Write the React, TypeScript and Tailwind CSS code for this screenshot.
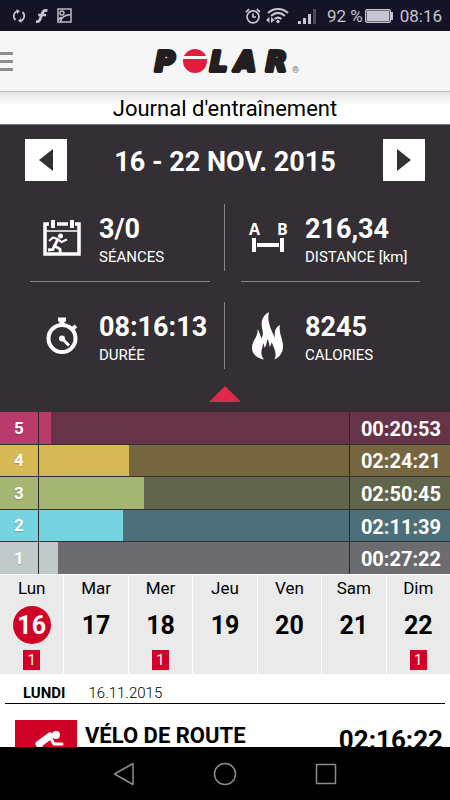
import React from 'react';

interface Zone {
  id: number;
  time: string;
  percent: number;
  solid: string;
  dim: string;
}

interface Day {
  label: string;
  date: number;
  count?: number;
  active?: boolean;
}

const zones: Zone[] = [
  { id: 5, time: '00:20:53', percent: 4, solid: 'bg-[#b93a6b]', dim: 'bg-[#663349]' },
  { id: 4, time: '02:24:21', percent: 29, solid: 'bg-[#d6b856]', dim: 'bg-[#756640]' },
  { id: 3, time: '02:50:45', percent: 34, solid: 'bg-[#a4b672]', dim: 'bg-[#60654b]' },
  { id: 2, time: '02:11:39', percent: 27, solid: 'bg-[#76d3e0]', dim: 'bg-[#4c6f79]' },
  { id: 1, time: '00:27:22', percent: 6, solid: 'bg-[#c1c9cb]', dim: 'bg-[#6b6b70]' },
];

const days: Day[] = [
  { label: 'Lun', date: 16, count: 1, active: true },
  { label: 'Mar', date: 17 },
  { label: 'Mer', date: 18, count: 1 },
  { label: 'Jeu', date: 19 },
  { label: 'Ven', date: 20 },
  { label: 'Sam', date: 21 },
  { label: 'Dim', date: 22, count: 1 },
];

const StatusBar: React.FC = () => (
  <div className="flex h-[31px] shrink-0 items-center bg-[#151426] pl-3 pr-2 text-[#c6c5d0]">
    <svg width="14" height="14" viewBox="0 0 14 14" fill="none" stroke="currentColor" strokeWidth="1.7">
      <path d="M5.5 2A5.3 5.3 0 0 0 3.5 11M8.5 12A5.3 5.3 0 0 0 10.5 3" />
      <path d="M4.5 0L8 2.2L5 5zM9.5 14L6 11.8L9 9z" fill="currentColor" stroke="none" />
    </svg>
    <svg className="ml-[9px]" width="13" height="14" viewBox="0 0 13 14" fill="none" stroke="currentColor" strokeWidth="2.7">
      <path d="M12.5 1.6C9.5 1 8.2 1.8 7.4 4L4.8 11C4.3 12.3 3.2 12.8 1 12.6M3.2 6H11" />
    </svg>
    <svg className="ml-[9px]" width="15" height="15" viewBox="0 0 15 15" fill="none" stroke="currentColor" strokeWidth="1.4">
      <rect x="1" y="1" width="13" height="13" />
      <circle cx="5" cy="5" r="2" />
      <path d="M3.5 14C4 9.5 7.5 7 14 6.5M1 12.5C2 10.5 3 9.5 5 9.5" />
    </svg>
    <div className="ml-auto flex items-center">
      <svg width="16" height="16" viewBox="0 0 16 16" fill="none" stroke="currentColor" strokeWidth="1.7">
        <circle cx="8" cy="8.8" r="6" />
        <path d="M8 5.5V9H11M1 4L4.2 1.2M15 4L11.8 1.2" />
      </svg>
      <svg className="ml-[5px]" width="23" height="17" viewBox="0 0 23 17" fill="none" stroke="currentColor" strokeWidth="2">
        <path d="M2 6C7.5 0.5 16.5 0.5 22 6M5 9C9.5 5 14.5 5 19 9M8.5 12C11 10 13 10 15.5 12" />
        <circle cx="12" cy="14.5" r="1.7" fill="currentColor" stroke="none" />
        <path d="M3.5 10V16L0 13zM5 10V16L8.5 13z" fill="currentColor" stroke="none" />
      </svg>
      <svg className="ml-[9px]" width="19" height="16" viewBox="0 0 19 16" fill="currentColor">
        <path d="M0 13h3v3H0zM5 10h3v6H5zM10 6h3v10h-3z" />
        <path d="M15 1h3v15h-3z" opacity="0.3" />
      </svg>
      <span className="ml-[10px] text-[17px] leading-5">92 %</span>
      <svg className="ml-[2px]" width="28" height="14" viewBox="0 0 28 14">
        <rect x="0.7" y="0.7" width="24.6" height="12.6" rx="1.5" fill="none" stroke="currentColor" strokeWidth="1.4" />
        <rect x="2" y="2" width="22" height="10" fill="currentColor" />
        <rect x="26" y="3" width="2" height="8" fill="currentColor" />
      </svg>
      <span className="ml-[7px] text-[17px] leading-5">08:16</span>
    </div>
  </div>
);

const PolarLogo: React.FC = () => (
  <svg width="152" height="48" viewBox="0 0 152 48" role="img" aria-label="Polar">
    <g
      fill="#231f20"
      stroke="#231f20"
      strokeWidth="4"
      strokeLinejoin="round"
      fontSize="27"
      fontWeight="700"
      fontStyle="italic"
      fontFamily="DejaVu Sans, sans-serif"
    >
      <text x="6" y="34">P</text>
      <text x="61" y="34">L</text>
      <text x="86" y="34">A</text>
      <text x="117" y="34">R</text>
    </g>
    <circle cx="46" cy="24" r="12" fill="#e31b3c" />
    <rect x="33" y="19" width="26" height="3" fill="#f6f6f6" />
    <text x="143" y="36" fontSize="9" fill="#777777" fontFamily="Roboto, sans-serif">®</text>
  </svg>
);

const SessionsIcon: React.FC = () => (
  <svg width="40" height="38" viewBox="0 0 40 38" fill="none" stroke="currentColor">
    <path d="M7 5H3V35H37V5H33" strokeWidth="3.5" />
    <path d="M4 12H36" strokeWidth="1.5" />
    <path d="M11 1V9M30 1V9" strokeWidth="4" />
    <path d="M15 5H26" strokeWidth="3.5" />
    <circle cx="18.5" cy="17" r="2.5" fill="currentColor" stroke="none" />
    <path d="M7 22L11 18.5L15.5 20L19.5 23L25 20.5" strokeWidth="2" />
    <path d="M16 20L12.5 27L18 30L18.5 35M12.5 26L11 30.5L6 31" strokeWidth="2.8" />
  </svg>
);

const DistanceIcon: React.FC = () => (
  <svg width="40" height="42" viewBox="0 0 40 42" fill="currentColor">
    <text x="1" y="18" fontSize="16" fontWeight="700" fontFamily="Open Sans, sans-serif">A</text>
    <text x="29" y="18" fontSize="16" fontWeight="700" fontFamily="Open Sans, sans-serif">B</text>
    <path d="M4 21h4v14H4zM9 26h22v4H9zM32 21h4v14h-4z" />
  </svg>
);

const DurationIcon: React.FC = () => (
  <svg width="40" height="38" viewBox="0 0 40 38" fill="none" stroke="currentColor">
    <circle cx="20" cy="21.5" r="13.5" strokeWidth="4" />
    <path d="M20 3V8" strokeWidth="5" />
    <path d="M16 2.5H24" strokeWidth="4" />
    <path d="M31 11.5L34 9" strokeWidth="4" />
    <circle cx="20" cy="21.5" r="3" fill="currentColor" stroke="none" />
    <path d="M20 21.5L27 28.5" strokeWidth="3" />
  </svg>
);

const CaloriesIcon: React.FC = () => (
  <svg width="40" height="50" viewBox="0 0 40 50" fill="currentColor">
    <path d="M21 1C14 5 13 11 14 17C15 21 15.5 24 13.5 27C12 25 12 21 9.5 18C10.5 26 4 29 4 37C4 43 9 47 16 48.5C12.5 44 13 40 14.5 36L15 32C16 34 16.5 35 16.5 37C19 34 18.5 31 19.5 28C21 31 21.5 33 21.5 36C23 34 23.5 33 23.5 31C26 37 29.5 43 26.5 48.5C32 46 35.5 41 35 34C34.5 27 30.5 22 32 14C28 16 26 20 27 27C24 20 18.5 11 21 1z" />
  </svg>
);

interface StatProps {
  icon: React.ReactNode;
  value: string;
  label: string;
  side: 'left' | 'right';
}

const Stat: React.FC<StatProps> = ({ icon, value, label, side }) => (
  <div className={`flex w-1/2 items-center gap-[17px] ${side === 'left' ? 'border-r border-[#87838a] pl-[42px]' : 'pl-[23px]'}`}>
    <div className="flex w-10 shrink-0 justify-center">{icon}</div>
    <div className="pt-[6px]">
      <div className="text-[27px] font-bold leading-8">{value}</div>
      <div className="whitespace-nowrap text-[15px] leading-6">{label}</div>
    </div>
  </div>
);

const Summary: React.FC = () => (
  <section className="shrink-0 bg-[#342f35] pb-[10px] pt-[14px] text-white">
    <div className="flex items-center justify-between px-[25px]">
      <button type="button" aria-label="Semaine précédente" className="flex size-[42px] items-center justify-center bg-white text-[#342f35]">
        <svg width="14" height="22" viewBox="0 0 14 22" fill="currentColor"><path d="M14 0V22L0 11z" /></svg>
      </button>
      <h2 className="pt-[3px] text-[27px] font-bold leading-8">16 - 22 NOV. 2015</h2>
      <button type="button" aria-label="Semaine suivante" className="flex size-[42px] items-center justify-center bg-white text-[#342f35]">
        <svg width="14" height="22" viewBox="0 0 14 22" fill="currentColor"><path d="M0 0V22L14 11z" /></svg>
      </button>
    </div>
    <div className="mt-[23px] flex h-[67px]">
      <Stat side="left" icon={<SessionsIcon />} value="3/0" label="SÉANCES" />
      <Stat side="right" icon={<DistanceIcon />} value="216,34" label="DISTANCE [km]" />
    </div>
    <div className="my-[10px] flex gap-[31px] px-[30px] pb-[10px]">
      <div className="h-px flex-1 bg-[#87838a]" />
      <div className="h-px flex-1 bg-[#87838a]" />
    </div>
    <div className="flex h-[67px]">
      <Stat side="left" icon={<DurationIcon />} value="08:16:13" label="DURÉE" />
      <Stat side="right" icon={<CaloriesIcon />} value="8245" label="CALORIES" />
    </div>
    <svg className="mx-auto mt-[17px] block" width="32" height="16" viewBox="0 0 32 16">
      <path d="M16 0L32 16H0z" fill="#e0284a" />
    </svg>
  </section>
);

const ZoneRow: React.FC<{ zone: Zone }> = ({ zone }) => (
  <div className={`flex flex-1 ${zone.dim}`}>
    <div className={`flex w-[39px] items-center justify-center border-r border-[#2b272c] pt-px text-[17px] font-bold text-white text-shadow-xs ${zone.solid}`}>
      {zone.id}
    </div>
    <div className="flex-1">
      <div className={`h-full ${zone.solid}`} style={{ width: `${zone.percent}%` }} />
    </div>
    <div className="flex w-[101px] items-center justify-end border-l border-[#2b272c] pr-[9px] pt-[2px] text-[20px] font-bold leading-6 text-white">
      {zone.time}
    </div>
  </div>
);

const DayCell: React.FC<{ day: Day }> = ({ day }) => (
  <button type="button" className="flex h-[99px] flex-col items-center bg-[#eaeaea] pt-px text-black">
    <span className="text-[17px] leading-6">{day.label}</span>
    <span
      className={`mt-[6px] flex size-[38px] items-center justify-center rounded-full pt-px text-[25px] font-bold ${day.active ? 'bg-[#d10027] text-white' : ''}`}
    >
      {day.date}
    </span>
    {day.count && (
      <span className="mt-[6px] flex h-5 w-[17px] items-center justify-center bg-[#d10027] text-[15px] text-white">{day.count}</span>
    )}
  </button>
);

const NavBar: React.FC = () => (
  <nav className="flex h-[53px] shrink-0 items-center justify-center gap-[78px] bg-black text-[#8c8c8c]">
    <button type="button" aria-label="Retour">
      <svg width="22" height="24" viewBox="0 0 22 24" fill="none" stroke="currentColor" strokeWidth="1.5" strokeLinejoin="round">
        <path d="M20 1.5V22.5L1.5 12z" />
      </svg>
    </button>
    <button type="button" aria-label="Accueil">
      <svg width="24" height="24" viewBox="0 0 24 24" fill="none" stroke="currentColor" strokeWidth="1.5">
        <circle cx="12" cy="12" r="10.5" />
      </svg>
    </button>
    <button type="button" aria-label="Applications récentes">
      <svg width="22" height="22" viewBox="0 0 22 22" fill="none" stroke="currentColor" strokeWidth="1.5">
        <rect x="1.5" y="1.5" width="19" height="19" rx="0.5" />
      </svg>
    </button>
  </nav>
);

const App: React.FC = () => (
  <div className="flex h-screen flex-col overflow-hidden bg-white font-[Roboto,sans-serif] text-black">
    <StatusBar />
    <header className="flex h-[60px] shrink-0 items-center bg-[#f6f6f6]">
      <button type="button" aria-label="Menu" className="flex w-[13px] flex-col gap-[5px]">
        <span className="h-[3px] bg-[#8e8e8e]" />
        <span className="h-[3px] bg-[#8e8e8e]" />
        <span className="h-[3px] bg-[#8e8e8e]" />
      </button>
      <div className="flex flex-1 justify-center pr-[13px]">
        <PolarLogo />
      </div>
    </header>
    <h1 className="h-[34px] shrink-0 border-y border-t-[#bcbcbc] border-b-[#77747a] bg-linear-to-b from-[#e4e4e4] to-white to-40% pt-px text-center text-[22px] leading-8">
      Journal d'entraînement
    </h1>
    <main className="flex min-h-0 flex-1 flex-col overflow-hidden">
      <Summary />
      <section className="flex h-[162px] shrink-0 flex-col gap-px bg-[#342f35]">
        {zones.map((zone) => (
          <ZoneRow key={zone.id} zone={zone} />
        ))}
      </section>
      <section className="grid shrink-0 grid-cols-7 gap-px pt-px">
        {days.map((day) => (
          <DayCell key={day.date} day={day} />
        ))}
      </section>
      <section className="shrink-0">
        <div className="mx-[5px] flex h-[30px] items-center gap-[23px] border-b border-black pl-[18px] pt-[8px] text-[15px] leading-5">
          <h3 className="font-bold">LUNDI</h3>
          <span className="font-light">16.11.2015</span>
        </div>
        <article className="flex gap-2 pl-[15px] pr-[7px] pt-4">
          <div className="h-[62px] w-[62px] bg-[#d10027] text-white">
            <svg width="62" height="62" viewBox="0 0 62 62" fill="none" stroke="currentColor" strokeLinecap="round">
              <circle cx="41" cy="15" r="4" fill="currentColor" stroke="none" />
              <path d="M24 24L35 16" strokeWidth="7" />
              <path d="M35 17L39 24H47M24 26L34 32L31 42" strokeWidth="3" />
              <circle cx="17" cy="44" r="9" strokeWidth="3" />
              <circle cx="46" cy="44" r="9" strokeWidth="3" />
            </svg>
          </div>
          <h4 className="text-[22px] font-bold leading-8">VÉLO DE ROUTE</h4>
          <span className="ml-auto text-[26px] font-bold leading-10">02:16:22</span>
        </article>
      </section>
    </main>
    <NavBar />
  </div>
);

export default App;
